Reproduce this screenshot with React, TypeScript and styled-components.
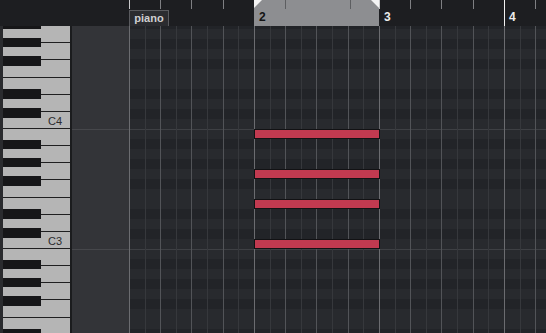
import React from 'react';
import styled, { createGlobalStyle } from 'styled-components';

const GlobalStyle = createGlobalStyle`
  html, body {
    margin: 0;
    padding: 0;
    background: #1e1f22;
    overflow: hidden;
  }
  body {
    font-family: 'Liberation Sans', 'DejaVu Sans', sans-serif;
  }
`;

const ROW_H = 10;
const OCTAVE_H = ROW_H * 12;
const WHITE_H = OCTAVE_H / 7;
const BEAT_W = 31.25;
const BAR_W = BEAT_W * 4;
const BLACK_NOTES = [1, 3, 6, 8, 10];

// black keys, measured from the top of each octave (B side)
const blackKeys = [
  { top: 11, height: 9 },
  { top: 29, height: 9 },
  { top: 47, height: 10 },
  { top: 80, height: 10 },
  { top: 99, height: 10 },
];

const whiteNames = ['B', 'A', 'G', 'F', 'E', 'D', 'C'];

// note rows from A#4 down to D#2, index relative to C3
const rowKeys = Array.from({ length: 32 }, (_, i) => 22 - i);

// C3 row sits 213px below the top of the roll
const C3_TOP = 213;

const notes = [
  { row: 11, bar: 1 },
  { row: 7, bar: 1 },
  { row: 4, bar: 1 },
  { row: 0, bar: 1 },
];

const Screen = styled.div`
  display: grid;
  grid-template-rows: 26px 307px;
  width: 546px;
  height: 333px;
  overflow: hidden;
  background: #1e1f22;
`;

const Ruler = styled.div`
  display: flex;
  background: #1d1e21;
`;

const RulerSpacer = styled.div`
  width: 129px;
  flex: none;
`;

const Timeline = styled.div`
  position: relative;
  flex: 1;
  background-image:
    repeating-linear-gradient(90deg, #c9c9cb 0 1px, transparent 1px ${BAR_W}px),
    repeating-linear-gradient(90deg, #7f8083 0 1px, transparent 1px ${BEAT_W}px);
  background-size: 100% 9px;
  background-repeat: no-repeat;
`;

const TrackTag = styled.div`
  position: absolute;
  left: 0;
  top: 10px;
  width: 40px;
  height: 16px;
  box-sizing: border-box;
  border: 1px solid #5a5b5f;
  border-bottom: none;
  background: #2b2c30;
  color: #cfcfd1;
  font-size: 11px;
  font-weight: bold;
  line-height: 15px;
  text-align: center;
`;

const Locator = styled.div`
  position: absolute;
  top: 0;
  height: 26px;
  background-color: #8d8e91;
  background-image: repeating-linear-gradient(90deg, transparent 0 ${BEAT_W}px, #5d5e61 ${BEAT_W}px ${BEAT_W + 1}px);
  background-size: 100% 9px;
  background-repeat: no-repeat;

  &::before,
  &::after {
    content: '';
    position: absolute;
    top: 0;
    width: 8px;
    height: 8px;
    background: #f4f4f4;
  }
  &::before {
    left: 0;
    clip-path: polygon(0 0, 100% 0, 0 100%);
  }
  &::after {
    right: 0;
    clip-path: polygon(0 0, 100% 0, 100% 100%);
  }
`;

const BarNumber = styled.span<{ $dark?: boolean }>`
  position: absolute;
  top: 11px;
  font-size: 12px;
  font-weight: bold;
  line-height: 13px;
  color: ${({ $dark }) => ($dark ? '#141414' : '#ececec')};
`;

const Cursor = styled.div`
  position: absolute;
  top: 0;
  width: 1px;
  height: 26px;
  background: #f2f2f2;
`;

const Body = styled.div`
  display: grid;
  grid-template-columns: 3px 67px 2px 57px 1fr;
  overflow: hidden;
`;

const EdgeStrip = styled.div`
  background: #2a2b2e;
`;

const Divider = styled.div`
  background: #1b1c1e;
`;

const Keyboard = styled.div`
  position: relative;
  overflow: hidden;
  background: #b5b5b5;
`;

const Octaves = styled.div`
  margin-top: -17px;
`;

const Octave = styled.div`
  position: relative;
  display: flex;
  flex-direction: column;
  height: ${OCTAVE_H}px;
`;

const WhiteKey = styled.div`
  position: relative;
  height: ${WHITE_H}px;
  box-sizing: border-box;
  border-bottom: 1px solid #1f1f20;
  background: #b5b5b5;
`;

const KeyLabel = styled.span`
  position: absolute;
  right: 8px;
  bottom: 1px;
  font-size: 11px;
  line-height: 11px;
  color: #2c2c2e;
`;

const BlackKey = styled.div`
  position: absolute;
  left: 0;
  width: 38px;
  background: #161618;
`;

const Lane = styled.div`
  overflow: hidden;
  background: #333438;
`;

const LaneRow = styled.div<{ $octave: boolean }>`
  height: ${ROW_H}px;
  box-sizing: border-box;
  border-top: 1px solid ${({ $octave }) => ($octave ? '#46474b' : 'transparent')};
`;

const Roll = styled.div`
  position: relative;
  overflow: hidden;
  background: #25272b;
`;

const Rows = styled.div`
  margin-top: -7px;
`;

const NoteRow = styled.div<{ $black: boolean; $octave: boolean }>`
  height: ${ROW_H}px;
  box-sizing: border-box;
  background: ${({ $black }) => ($black ? '#222428' : '#282a2e')};
  border-top: 1px solid ${({ $octave }) => ($octave ? '#3e4044' : 'transparent')};
`;

const GridLines = styled.div`
  position: absolute;
  inset: 0;
  pointer-events: none;
  background-image:
    repeating-linear-gradient(90deg, #6b6c70 0 1px, transparent 1px ${BAR_W}px),
    repeating-linear-gradient(90deg, #525458 0 1px, transparent 1px ${BEAT_W}px),
    repeating-linear-gradient(90deg, #36383c 0 1px, transparent 1px ${BEAT_W / 2}px);
`;

const Note = styled.div`
  position: absolute;
  height: ${ROW_H}px;
  box-sizing: border-box;
  border: 1px solid #121214;
  background: #c13a50;
`;

const App: React.FC = () => {
  return (
    <>
      <GlobalStyle />
      <Screen>
        <Ruler>
          <RulerSpacer />
          <Timeline>
            <TrackTag>piano</TrackTag>
            <Locator style={{ left: BAR_W, width: BAR_W }} />
            <BarNumber $dark style={{ left: BAR_W + 5 }}>2</BarNumber>
            <BarNumber style={{ left: BAR_W * 2 + 5 }}>3</BarNumber>
            <Cursor style={{ left: BAR_W * 3 }} />
            <BarNumber style={{ left: BAR_W * 3 + 5 }}>4</BarNumber>
          </Timeline>
        </Ruler>

        <Body>
          <EdgeStrip />
          <Keyboard>
            <Octaves>
              {[4, 3, 2].map(oct => (
                <Octave key={oct}>
                  {whiteNames.map(name => (
                    <WhiteKey key={name}>
                      {name === 'C' && oct !== 2 && <KeyLabel>C{oct}</KeyLabel>}
                    </WhiteKey>
                  ))}
                  {blackKeys.map((k, i) => (
                    <BlackKey key={i} style={{ top: k.top, height: k.height }} />
                  ))}
                </Octave>
              ))}
            </Octaves>
          </Keyboard>
          <Divider />
          <Lane>
            <Rows>
              {rowKeys.map(k => (
                <LaneRow key={k} $octave={((k % 12) + 12) % 12 === 11} />
              ))}
            </Rows>
          </Lane>
          <Roll>
            <Rows>
              {rowKeys.map(k => {
                const pc = ((k % 12) + 12) % 12;
                return <NoteRow key={k} $black={BLACK_NOTES.includes(pc)} $octave={pc === 11} />;
              })}
            </Rows>
            <GridLines />
            {notes.map((n, i) => (
              <Note
                key={i}
                style={{ top: C3_TOP - ROW_H * n.row, left: BAR_W * n.bar, width: BAR_W + 1 }}
              />
            ))}
          </Roll>
        </Body>
      </Screen>
    </>
  );
};

export default App;
